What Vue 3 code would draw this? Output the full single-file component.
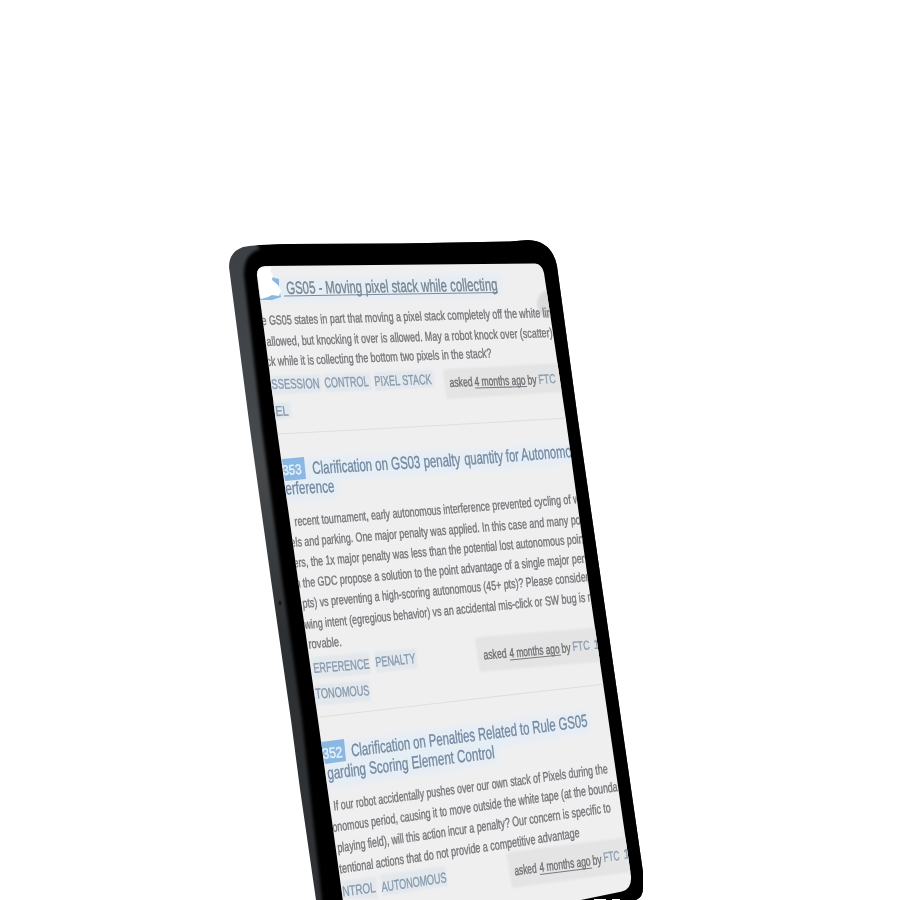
<script setup>
// Each line runs from (x1, y1) to (x2, y2) along its baseline on the tilted display.
const line = (kind, text, x1, y1, x2, y2, size) => ({ kind, text, x1, y1, x2, y2, size })

const lines = [
  line('title visited', 'GS05 - Moving pixel stack while collecting', 287, 294, 498, 290.5, 17.5),
  line('body', 'e GS05 states in part that moving a pixel stack completely off the white lin', 262, 325, 552, 317, 13),
  line('body', 'allowed, but knocking it over is allowed. May a robot knock over (scatter)', 267, 346, 553, 337, 13),
  line('body', 'ck while it is collecting the bottom two pixels in the stack?', 267, 366, 492, 357.5, 13),
  line('tag', 'SSESSION', 272, 389, 320, 388, 14),
  line('tag', 'CONTROL', 325, 387.5, 369, 386, 14),
  line('tag', 'PIXEL STACK', 375, 386, 432, 384, 14),
  line('tag', 'EL', 276, 416, 289, 415.5, 14),
  line('meta', 'asked', 450, 387, 473, 386, 13),
  line('meta', '4 months ago', 475, 386, 526, 384.5, 13),
  line('meta', 'by', 528, 384.5, 537, 384, 13),
  line('user', 'FTC', 539, 384, 556, 383, 13),

  line('title', 'Clarification on GS03 penalty', 313, 474, 461, 465.5, 17.5),
  line('title', 'quantity for Autonomo', 465, 465, 572, 457, 17.5),
  line('title', 'erference', 286, 494.5, 335, 492, 17.5),
  line('body', 'recent tournament, early autonomous interference prevented cycling of w', 295, 526, 580, 503, 13),
  line('body', 'els and parking. One major penalty was applied. In this case and many po', 291, 547, 581, 524, 13),
  line('body', 'ers, the 1x major penalty was less than the potential lost autonomous poin', 294, 567.5, 584, 543, 13),
  line('body', 'n the GDC propose a solution to the point advantage of a single major pen', 296, 588, 587, 562.5, 13),
  line('body', 'pts) vs preventing a high-scoring autonomous (45+ pts)? Please consider', 303, 608, 589, 581, 13),
  line('body', 'wing intent (egregious behavior) vs an accidental mis-click or SW bug is n', 305, 629, 593, 601, 13),
  line('body', 'rovable.', 309, 648.5, 342, 646, 13),
  line('tag', 'ERFERENCE', 314, 673, 370, 668.5, 14),
  line('tag', 'PENALTY', 376, 667, 416, 663, 14),
  line('tag', 'TONOMOUS', 316, 698.5, 370, 695, 14),
  line('meta', 'asked', 484, 659.5, 507, 657.5, 13),
  line('meta', '4 months ago', 510, 657.5, 560, 653, 13),
  line('meta', 'by', 562, 653, 571, 652, 13),
  line('user', 'FTC', 573, 651, 590, 649.5, 13),
  line('user', '1', 594, 649, 600, 648.5, 13),

  line('title', 'Clarification on Penalties Related to Rule GS05', 352, 756.5, 588, 726.5, 17.5),
  line('title', 'garding Scoring Element Control', 328, 779.5, 495, 758, 17.5),
  line('body', 'If our robot accidentally pushes over our own stack of Pixels during the', 334, 810.5, 608, 773, 13.5),
  line('body', 'onomous period, causing it to move outside the white tape (at the bounda', 333, 832, 618, 791, 13.5),
  line('body', 'playing field), will this action incur a penalty? Our concern is specific to', 338, 852.5, 611, 812, 13.5),
  line('body', 'tentional actions that do not provide a competitive advantage', 340, 873.5, 580, 837, 13.5),
  line('tag', 'NTROL', 343, 896.5, 376, 892, 14),
  line('tag', 'AUTONOMOUS', 382, 892, 447, 882, 14),
  line('meta', 'asked', 515, 875.5, 537, 872.5, 13.5),
  line('meta', '4 months ago', 540, 872, 591, 865.5, 13.5),
  line('meta', 'by', 593, 865, 602, 864, 13.5),
  line('user', 'FTC', 604, 862, 620, 860, 13.5),
  line('user', '1', 624, 859, 630, 858, 13.5),

  line('number', '353', 283, 475, 302, 474, 14),
  line('number', '352', 323, 759, 343, 757, 15)
]

const place = (l) => `matrix(1 ${(l.y2 - l.y1) / (l.x2 - l.x1)} 0.12 1 ${l.x1} ${l.y1})`
</script>

<template>
  <main class="stage">
    <svg class="scene" viewBox="0 0 900 900">
      <defs>
        <clipPath id="display">
          <path d="M257 276Q256 267 265 266L535 263.500Q542 264 544 273L566 420 588 580 607 710 631 876Q632 889 622 891.500L576 901H343L318 720 298 580 277 430Z" />
        </clipPath>
        <clipPath id="shell">
          <path d="M229 267Q229 252 243 247Q250 245 290 244L400 243.500 510 241.500 528 240Q552 241 557 266L578 420 601 580 620 712 643 872V888Q643 897 636 900H316L300 789 291 720 271 580 250 429Z" />
        </clipPath>
        <linearGradient id="side" x1="0" y1="0" x2="0" y2="1">
          <stop offset="0" stop-color="#3c4044" />
          <stop offset=".35" stop-color="#474a4d" />
          <stop offset=".6" stop-color="#2d3033" />
          <stop offset="1" stop-color="#303235" />
        </linearGradient>
        <filter id="edge"><feGaussianBlur stdDeviation="1.5" /></filter>
        <filter id="soft"><feGaussianBlur stdDeviation=".6" /></filter>
        <filter id="patch" x="-5%" y="-10%" width="110%" height="120%"><feGaussianBlur stdDeviation="1.300" /></filter>
        <filter id="halo" x="-20%" y="-50%" width="140%" height="200%"><feGaussianBlur stdDeviation="3" /></filter>
      </defs>

      <g clip-path="url(#shell)">
        <path fill="url(#side)" d="M225 236H650V900H225Z" />
        <path class="bezel" filter="url(#edge)" d="M244 276Q243 254 260 249L250 235H660V910H323L302 720 282 580 262 430Z" />
        <ellipse class="button" cx="280" cy="603" rx="1.500" ry="2.500" />
      </g>
      <path class="screen" d="M257 276Q256 267 265 266L535 263.500Q542 264 544 273L566 420 588 580 607 710 631 876Q632 889 622 891.500L576 901H343L318 720 298 580 277 430Z" />

      <g clip-path="url(#display)">
        <g class="glow" filter="url(#halo)">
          <path d="M258 280L500 274 501 296 260 302Z" />
          <path d="M309 458L570 445 573 463 337 480 338 498 284 501V480Z" />
          <path d="M347 741L588 711 590 731 496 747 497 763 328 788 325 765Z" />
        </g>
        <g class="chips" filter="url(#patch)">
          <path d="M269 376L321 374 322 392 271 395Z" />
          <path d="M324 374L370 373 372 391 325 392Z" />
          <path d="M374 372L433 370 435 387 375 391Z" />
          <path d="M273 403L290 402 292 418 274 420Z" />
          <path d="M311 657L369 652 371 674 313 679Z" />
          <path d="M374 652L416 648 418 668 376 673Z" />
          <path d="M314 685L369 680 371 701 316 706Z" />
          <path d="M342 881L376 876 378 899H343Z" />
          <path d="M380 875L445 866 448 886 383 896Z" />
        </g>
        <g class="cards" filter="url(#patch)">
          <path d="M443 372Q443 369 447 369L562 363V392L447 399Z" />
          <path d="M475 640Q475 637 479 637L604 627 608 661 480 672Z" />
          <path d="M507 857Q506 853 510 852L636 836 638 871 512 888Z" />
        </g>
        <g class="badges" filter="url(#soft)">
          <path d="M271 277L279 279V289L281 297 272 300H259L267 293Z" />
          <path d="M282 459L304 457 306 479 285 481Z" />
          <path d="M321 742L344 739 346 761 325 764Z" />
        </g>
        <ellipse class="corner" cx="547" cy="304" rx="10" ry="13" filter="url(#patch)" />
        <g class="rules" filter="url(#soft)">
          <path d="M278 434L430 426 568 418" />
          <path d="M320 717L440 703 605 684" />
        </g>
        <g filter="url(#soft)">
          <text
            v-for="(l, i) in lines"
            :key="i"
            :class="l.kind"
            :transform="place(l)"
            :font-size="l.size"
            :textLength="l.x2 - l.x1"
            lengthAdjust="spacingAndGlyphs"
          >{{ l.text }}</text>
        </g>
        <g class="underlines" filter="url(#soft)">
          <path class="heading-line" d="M284 296L498 292.500" />
          <path d="M475 388L527 386.500" />
          <path d="M510 660L561 655" />
          <path d="M540 874.500L592 868" />
        </g>
      </g>

      <path class="gap" d="M257.500 274Q257 268 263 267.500H272L270 271 273 275 272 280 278 285 281 291 279 296 272 295 268 297 261 299Z" />
      <path class="gap" d="M594 900V899H606V900ZM612 900V899H620V900Z" />
    </svg>
  </main>
</template>

<style>
body {
  background: #fff;
}
</style>

<style scoped>
.stage {
  width: 900px;
  height: 900px;
  overflow: hidden;
}
.scene {
  display: block;
  width: 900px;
  height: 900px;
  font-family: "Liberation Sans", Arial, sans-serif;
}
.bezel {
  fill: #020304;
}
.button {
  fill: #15181b;
}
.screen {
  fill: #efeff0;
}
.glow {
  fill: #e5edf5;
}
.chips {
  fill: #e3e8ed;
}
.cards {
  fill: #e4e4e5;
}
.badges {
  fill: #8ab8e2;
}
.corner {
  fill: #d9dadc;
}
.rules {
  fill: none;
  stroke: #dedfe0;
  stroke-width: 1.2;
}
text {
  stroke-width: 0.35px;
}
.title {
  fill: #7389a0;
  stroke: #7389a0;
}
.visited {
  fill: #78848f;
  stroke: #78848f;
}
.body {
  fill: #737578;
  stroke: #737578;
}
.tag {
  fill: #8699ad;
  stroke: #8699ad;
}
.meta {
  fill: #6c6e71;
  stroke: #6c6e71;
}
.user {
  fill: #8b9cae;
  stroke: #8b9cae;
}
.number {
  fill: #e9f2fa;
  stroke: #e9f2fa;
}
.underlines {
  fill: none;
  stroke: #76797e;
  stroke-width: 1.1;
}
.heading-line {
  stroke: #7c8b99;
}
.gap {
  fill: #fff;
}
</style>
